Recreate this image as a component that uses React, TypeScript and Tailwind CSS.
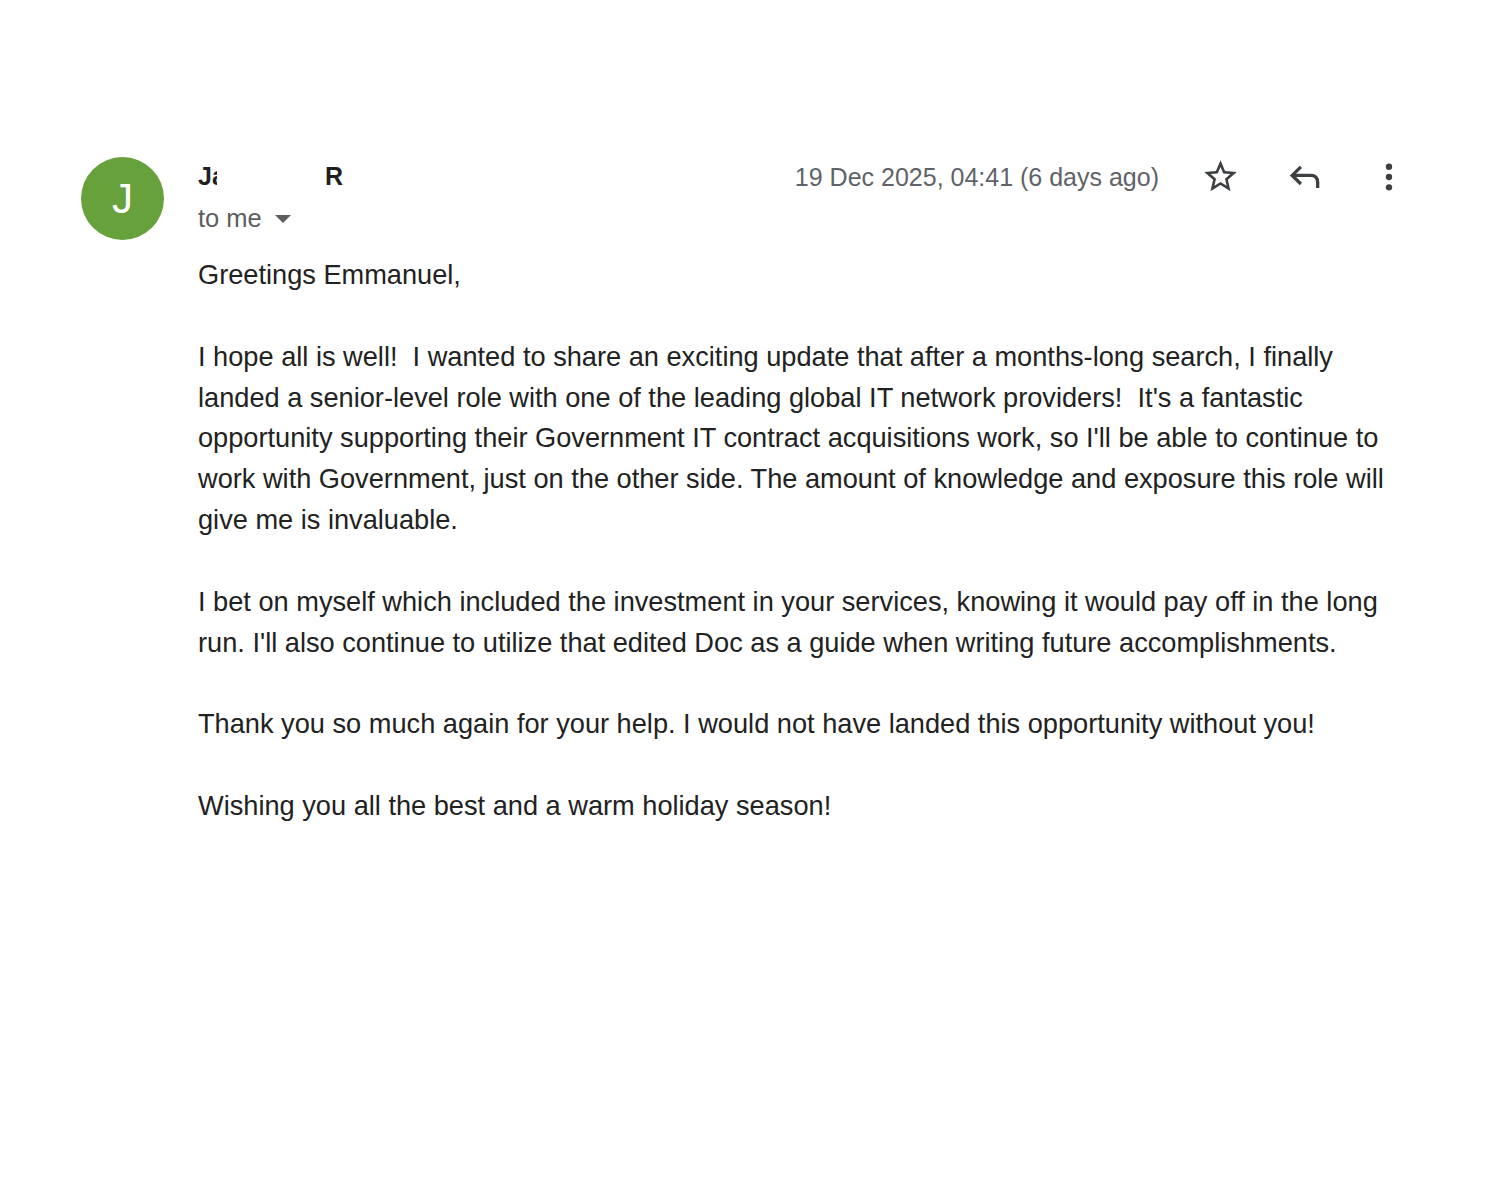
import React from "react";

// ─── Header icons ─────────────────────────────────────────────────────────────

function StarIcon() {
  return (
    <svg viewBox="0 0 24 24" className="h-[39px] w-[39px]" fill="#3c4043" aria-hidden="true">
      <path d="M22 9.24l-7.19-.62L12 2 9.19 8.63 2 9.24l5.46 4.73L5.82 21 12 17.27 18.18 21l-1.63-7.03L22 9.24zM12 15.4l-3.76 2.27 1-4.28-3.32-2.88 4.38-.38L12 6.1l1.71 4.04 4.38.38-3.32 2.88 1 4.28L12 15.4z" />
    </svg>
  );
}

function ReplyIcon() {
  return (
    <svg
      viewBox="0 0 24 24"
      className="h-[38px] w-[38px]"
      fill="none"
      stroke="#3c4043"
      strokeWidth={2.1}
      aria-hidden="true"
    >
      <path d="M9.4 5.6L3.9 11l5.5 5.4" />
      <path d="M3.9 11H15.5q4.5 0 4.5 4.5V19" />
    </svg>
  );
}

function MoreIcon() {
  return (
    <svg viewBox="0 0 24 24" className="h-[38px] w-[38px]" fill="#3c4043" aria-hidden="true">
      <circle cx="12" cy="5.5" r="2" />
      <circle cx="12" cy="12" r="2" />
      <circle cx="12" cy="18.5" r="2" />
    </svg>
  );
}

// ─── Message ──────────────────────────────────────────────────────────────────

const paragraphs = [
  "Greetings Emmanuel,",
  "I hope all is well!\u00a0 I wanted to share an exciting update that after a months-long search, I finally landed a senior-level role with one of the leading global IT network providers!\u00a0 It's a fantastic opportunity supporting their Government IT contract acquisitions work, so I'll be able to continue to work with Government, just on the other side. The amount of knowledge and exposure this role will give me is invaluable.",
  "I bet on myself which included the investment in your services, knowing it would pay off in the long run. I'll also continue to utilize that edited Doc as a guide when writing future accomplishments.",
  "Thank you so much again for your help. I would not have landed this opportunity without you!",
  "Wishing you all the best and a warm holiday season!",
];

export default function App() {
  return (
    <div
      className="min-h-[1200px] w-[1500px] bg-white pl-[81px] pt-[157px]"
      style={{ fontFamily: '"Liberation Sans", Arial, sans-serif' }}
    >
      <div className="flex gap-[34px]">
        {/* Avatar */}
        <div className="flex h-[83px] w-[83px] shrink-0 items-center justify-center rounded-full bg-[#67a13b] text-[42px] leading-none text-white">
          J
        </div>

        <div className="flex-1 pr-[92px]">
          {/* Header */}
          <div className="flex items-start justify-between">
            <div>
              <div className="mt-[4px] flex h-[30px] items-center text-[25px] font-bold leading-[30px] text-[#1f1f1f]">
                <span>J</span>
                <span className="inline-block h-[30px] w-[5px] overflow-hidden">a</span>
                <span className="ml-[108px]">R</span>
              </div>
              <div className="mt-[11px] flex items-center gap-[13px] text-[25.5px] leading-[32px] text-[#5e5e5e]">
                <span>to me</span>
                <svg viewBox="0 0 10 5" className="mt-[2px] h-[8px] w-[16px]" fill="#5e5e5e" aria-hidden="true">
                  <path d="M0 0h10L5 5z" />
                </svg>
              </div>
            </div>

            <div className="flex items-center">
              <span className="mr-[42px] text-[25px] leading-[38px] text-[#5f6368]">
                19 Dec 2025, 04:41 (6 days ago)
              </span>
              <div className="flex items-center gap-[46px]">
                <StarIcon />
                <ReplyIcon />
                <MoreIcon />
              </div>
            </div>
          </div>

          {/* Body */}
          <div className="mt-[21px] max-w-[1200px] text-[27.2px] leading-[40.85px] text-[#222222]">
            {paragraphs.map((p, i) => (
              <p key={i} className="mb-[40.85px] whitespace-pre-wrap">
                {p}
              </p>
            ))}
          </div>
        </div>
      </div>
    </div>
  );
}
